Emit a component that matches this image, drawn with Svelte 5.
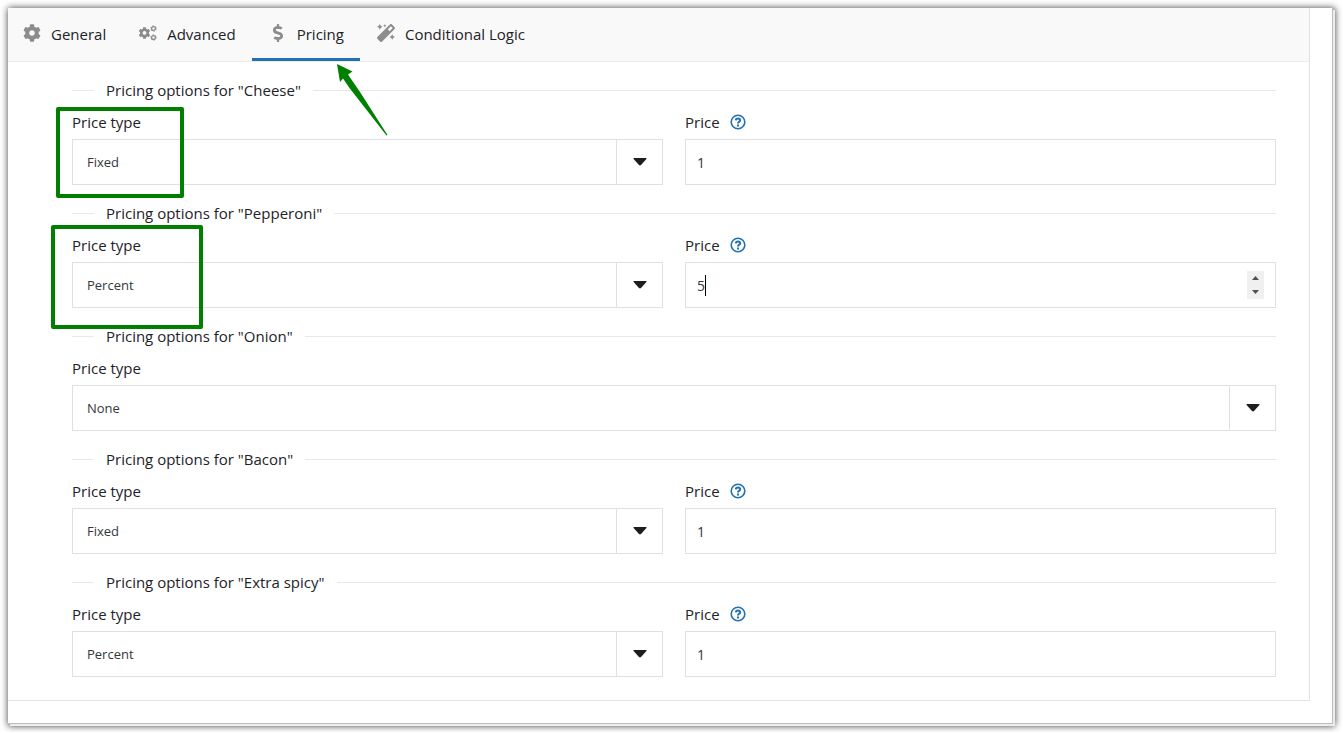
<script lang="ts">
	type Tab = { id: string; label: string; viewBox: string; path: string };
	type Group = { name: string; type: string; price: number; editing?: boolean };

	const cog =
		'M487.4 315.7l-42.6-24.6c4.3-23.2 4.3-47 0-70.2l42.6-24.6c4.9-2.8 7.1-8.6 5.5-14-11.1-35.6-30-67.8-54.7-94.6-3.8-4.1-10-5.1-14.8-2.3L380.8 110c-17.9-15.4-38.5-27.3-60.8-35.1V25.8c0-5.6-3.9-10.5-9.4-11.7-36.7-8.2-74.3-7.8-109.2 0-5.5 1.2-9.4 6.1-9.4 11.7V75c-22.2 7.9-42.8 19.8-60.8 35.1L88.7 85.5c-4.9-2.8-11-1.9-14.8 2.3-24.7 26.7-43.6 58.9-54.7 94.6-1.7 5.4.6 11.2 5.5 14L67.3 221c-4.3 23.2-4.3 47 0 70.2l-42.6 24.6c-4.9 2.8-7.1 8.6-5.5 14 11.1 35.6 30 67.8 54.7 94.6 3.8 4.1 10 5.1 14.8 2.3l42.6-24.6c17.9 15.4 38.5 27.3 60.8 35.1v49.2c0 5.6 3.9 10.5 9.4 11.7 36.7 8.2 74.3 7.8 109.2 0 5.5-1.2 9.4-6.1 9.4-11.7v-49.2c22.2-7.9 42.8-19.8 60.8-35.1l42.6 24.6c4.9 2.8 11 1.9 14.8-2.3 24.7-26.7 43.6-58.9 54.7-94.6 1.5-5.5-.7-11.3-5.6-14.1zM256 336c-44.1 0-80-35.9-80-80s35.9-80 80-80 80 35.9 80 80-35.9 80-80 80z';
	const dollar =
		'M209.2 233.4l-108-31.6C88.7 198.2 80 186.5 80 173.5c0-16.3 13.2-29.5 29.5-29.5h66.3c12.2 0 24.2 3.7 34.2 10.5 6.1 4.1 14.3 3.1 19.5-2l34.8-34c7.1-6.9 6.1-18.4-1.8-24.5C238 74.8 207.4 64.1 176 64V16c0-8.8-7.2-16-16-16h-32c-8.8 0-16 7.2-16 16v48h-2.5C45.8 64-5.4 118.7.5 183.6c4.2 46.1 39.4 83.6 83.8 96.6l102.5 30c12.5 3.7 21.2 15.3 21.2 28.3 0 16.3-13.2 29.5-29.5 29.5h-66.3C100 368 88 364.3 78 357.5c-6.1-4.1-14.3-3.1-19.5 2l-34.8 34c-7.1 6.9-6.1 18.4 1.8 24.5 24.5 19.2 55.1 29.9 86.5 30v48c0 8.8 7.2 16 16 16h32c8.8 0 16-7.2 16-16v-48.2c46.6-.9 90.3-28.6 105.7-72.7 21.5-61.6-14.6-124.8-72.5-141.7z';
	const wand =
		'M224 96l16-32 32-16-32-16-16-32-16 32-32 16 32 16 16 32zM80 160l26.66-53.33L160 80l-53.34-26.67L80 0 53.34 53.33 0 80l53.34 26.67L80 160zm352 128l-26.66 53.33L352 368l53.34 26.67L432 448l26.66-53.33L512 368l-53.34-26.67L432 288zm70.62-193.77L417.77 9.38C411.53 3.12 403.34 0 395.15 0c-8.19 0-16.38 3.12-22.63 9.38L9.38 372.52c-12.5 12.5-12.5 32.76 0 45.25l84.85 84.85c6.25 6.25 14.44 9.37 22.62 9.37 8.19 0 16.38-3.12 22.63-9.37l363.14-363.15c12.5-12.48 12.5-32.75 0-45.24zM359.45 203.46l-50.91-50.91 86.6-86.6 50.91 50.91-86.6 86.6z';

	const tabs: Tab[] = [
		{ id: 'general', label: 'General', viewBox: '0 0 512 512', path: cog },
		{ id: 'advanced', label: 'Advanced', viewBox: '0 0 20 18', path: '' },
		{ id: 'pricing', label: 'Pricing', viewBox: '0 0 288 512', path: dollar },
		{ id: 'logic', label: 'Conditional Logic', viewBox: '0 0 512 512', path: wand }
	];

	let active = $state('pricing');
	let groups: Group[] = $state([
		{ name: 'Cheese', type: 'Fixed', price: 1 },
		{ name: 'Pepperoni', type: 'Percent', price: 5, editing: true },
		{ name: 'Onion', type: 'None', price: 0 },
		{ name: 'Bacon', type: 'Fixed', price: 1 },
		{ name: 'Extra spicy', type: 'Percent', price: 1 }
	]);
</script>

<div class="window">
	<div class="panel">
		<nav class="tabs">
			{#each tabs as tab (tab.id)}
				<button type="button" class="tab" class:active={active === tab.id} onclick={() => (active = tab.id)}>
					<svg class="tab-icon" viewBox={tab.viewBox} aria-hidden="true">
						{#if tab.path}
							<path d={tab.path} />
						{:else}
							<g transform="translate(0.5 3) scale(0.0234)"><path d={cog} /></g>
							{#each [4.5, 13.5] as cy}
								<circle cx="15.5" {cy} r="1.9" class="ring" />
								<circle cx="15.5" {cy} r="2.7" class="teeth" />
							{/each}
						{/if}
					</svg>
					<span class="tab-label">{tab.label}</span>
				</button>
			{/each}
		</nav>

		<form class="groups" onsubmit={(e) => e.preventDefault()}>
			{#each groups as group, i (group.name)}
				<section class="group">
					<h2>Pricing options for "{group.name}"</h2>
					<div class="fields">
						<div class="field">
							<div class="label-row"><label for="type-{i}">Price type</label></div>
							<div class="select">
								<select id="type-{i}" bind:value={group.type}>
									<option>None</option>
									<option>Fixed</option>
									<option>Percent</option>
								</select>
								<span class="arrow">
									<svg viewBox="0 0 14 8" aria-hidden="true"><path d="M1 0h12q1 0 .4 1L8 7q-1 .8-2 0L.6 1Q0 0 1 0z" /></svg>
								</span>
							</div>
						</div>
						{#if group.type !== 'None'}
							<div class="field">
								<div class="label-row">
									<label for="price-{i}">Price</label>
									<svg class="help" viewBox="0 0 16 16" aria-hidden="true">
										<circle cx="8" cy="8" r="6.8" />
										<path d="M5.8 6.3Q6 4.5 8 4.5t2.2 1.8Q10.2 7.3 9 7.9 8 8.4 8 9.5" class="hook" />
										<path d="M8 10.6v1.8" class="hook" />
									</svg>
								</div>
								<div class="number">
									<input id="price-{i}" type="number" bind:value={group.price} />
									{#if group.editing}
										<span class="caret"></span>
										<div class="spinner">
											<button type="button" aria-label="Increase" onclick={() => group.price++}>
												<svg viewBox="0 0 7 4"><path d="M0 4L3.5 0 7 4z" /></svg>
											</button>
											<button type="button" aria-label="Decrease" onclick={() => group.price--}>
												<svg viewBox="0 0 7 4"><path d="M0 0h7L3.5 4z" /></svg>
											</button>
										</div>
									{/if}
								</div>
							</div>
						{/if}
					</div>
				</section>
			{/each}
		</form>
	</div>

	<!-- annotations on top of the form -->
	<div class="mark mark-fixed"></div>
	<div class="mark mark-percent"></div>
	<svg class="pointer" viewBox="0 0 52 72" aria-hidden="true">
		<path d="M1 0L16.5 7.5 12 10.5 24 28 51.5 71 50.5 71.5 13.5 24 7 14.5 4 18z" />
	</svg>
</div>

<style>
	:global(body) {
		background: #fff;
		color: #1d2327;
		font-family: 'Segoe UI', 'Open Sans', sans-serif;
		font-size: 15px;
		font-weight: 500;
	}

	.window {
		position: relative;
		box-sizing: border-box;
		margin: 8px 10px 8px 8px;
		padding: 0 22px 22px 0;
		background: #fff;
		border-right: 1px solid #bcbdc0;
		border-bottom: 1px solid #bcbdc0;
		box-shadow:
			2px 2px 0 #ececee,
			1px 1px 7px 1px rgba(0, 0, 0, 0.75);
	}

	.panel {
		border-right: 1px solid #e2e2e4;
		border-bottom: 1px solid #e2e2e4;
	}

	.tabs {
		display: flex;
		height: 53px;
		background: #f9f9f9;
		border-bottom: 1px solid #ececee;
	}

	.tab {
		display: flex;
		align-items: center;
		gap: 9px;
		padding: 0 16px;
		border: 0;
		border-bottom: 3px solid transparent;
		background: none;
		color: inherit;
		font: inherit;
		cursor: pointer;
	}

	.tab:first-child {
		padding-left: 14px;
	}

	.tab.active {
		border-bottom-color: #2271b1;
	}

	.tab-icon {
		width: 20px;
		height: 18px;
		fill: #8c8c8c;
	}

	.tab-label {
		padding-top: 2px;
	}

	.ring,
	.teeth {
		fill: none;
		stroke: #8c8c8c;
		stroke-width: 1.3;
	}

	.teeth {
		stroke-width: 1;
		stroke-dasharray: 1.41 1.41;
	}

	.groups {
		display: flex;
		flex-direction: column;
		gap: 17px;
		padding: 17px 33px 23px 64px;
	}

	h2 {
		display: flex;
		align-items: center;
		gap: 12px;
		margin: 0 0 11px;
		font-size: 15px;
		font-weight: 500;
		line-height: 22px;
	}

	h2::before,
	h2::after {
		content: '';
		width: 22px;
		height: 1px;
		background: #e8e8ea;
	}

	h2::after {
		flex: 1;
	}

	.fields {
		display: flex;
		gap: 22px;
	}

	.field {
		flex: 1;
		min-width: 0;
	}

	.label-row {
		display: flex;
		align-items: center;
		gap: 10px;
		height: 20px;
		margin-bottom: 7px;
	}

	.help {
		width: 16px;
		height: 16px;
		fill: none;
		stroke: #2271b1;
		stroke-width: 1.6;
	}

	.hook {
		stroke-width: 2;
	}

	.select,
	.number {
		position: relative;
		display: flex;
		box-sizing: border-box;
		height: 46px;
		border: 1px solid #e0e0e4;
		background: #fff;
	}

	select,
	input {
		width: 100%;
		border: 0;
		outline: 0;
		background: none;
		color: #32373c;
		font: inherit;
		font-size: 13px;
		font-weight: 400;
		appearance: none;
	}

	select {
		padding: 0 60px 0 14px;
	}

	input {
		padding: 0 11px;
		font-size: 14px;
		appearance: textfield;
	}

	input::-webkit-inner-spin-button {
		display: none;
	}

	.arrow {
		position: absolute;
		top: 0;
		right: 0;
		bottom: 0;
		display: flex;
		align-items: center;
		justify-content: center;
		width: 45px;
		border-left: 1px solid #e0e0e4;
		pointer-events: none;
	}

	.arrow svg {
		width: 14px;
		height: 8px;
		fill: #1d1d1d;
	}

	.caret {
		position: absolute;
		top: 12px;
		left: 19px;
		width: 1px;
		height: 21px;
		background: #000;
	}

	.spinner {
		position: absolute;
		top: 8px;
		right: 11px;
		display: flex;
		flex-direction: column;
		width: 17px;
		height: 28px;
		background: #f0f0f0;
	}

	.spinner button {
		display: flex;
		flex: 1;
		align-items: center;
		justify-content: center;
		padding: 0;
		border: 0;
		background: none;
	}

	.spinner svg {
		width: 7px;
		height: 4px;
		fill: #505050;
	}

	.mark {
		position: absolute;
		box-sizing: border-box;
		border: 4px solid #008000;
		border-radius: 2px;
		pointer-events: none;
	}

	.mark-fixed {
		top: 99px;
		left: 48px;
		width: 128px;
		height: 91px;
	}

	.mark-percent {
		top: 217px;
		left: 43px;
		width: 152px;
		height: 104px;
	}

	.pointer {
		position: absolute;
		top: 56px;
		left: 328px;
		width: 52px;
		height: 72px;
		fill: #008000;
		pointer-events: none;
	}
</style>
